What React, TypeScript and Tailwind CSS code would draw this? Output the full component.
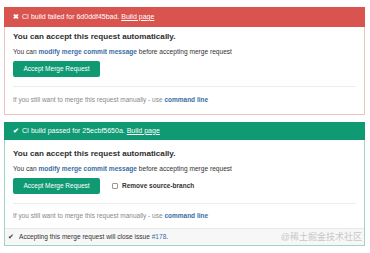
import React from "react";

const font = { fontFamily: '"Liberation Sans", Arial, "Noto Sans CJK SC", sans-serif' };

const Link: React.FC<{ children: React.ReactNode }> = ({ children }) => (
  <span className="font-bold text-[#3a6ea5]">{children}</span>
);

const AcceptBlock: React.FC<{ withCheckbox?: boolean }> = ({ withCheckbox }) => (
  <div className="px-[8px]">
    <div className="h-[20px] flex items-center text-[8.1px] font-bold text-[#2e2e2e] leading-none">
      You can accept this request automatically.
    </div>
    <div className="h-[10px] flex items-center text-[6.6px] text-[#333]">
      You can&nbsp;<Link>modify merge commit message</Link>&nbsp;before accepting merge request
    </div>
    <div className="mt-[4px] flex items-center gap-[12px]">
      <button className="w-[87px] h-[16px] rounded-[2px] bg-[#0f9a73] text-white text-[6.5px] flex items-center justify-center">
        Accept Merge Request
      </button>
      {withCheckbox && (
        <label className="flex items-center gap-[4px] text-[6.5px] font-bold text-[#333]">
          <span className="w-[6px] h-[6px] border border-[#999] rounded-[1px] bg-white" />
          Remove source-branch
        </label>
      )}
    </div>
    <div className="mt-[9px] border-t border-[#ececec]" />
    <div className={`${withCheckbox ? "h-[24px]" : "h-[26px]"} flex items-center text-[6.5px] text-[#888]`}>
      If you still want to merge this request manually - use&nbsp;<Link>command line</Link>
    </div>
  </div>
);

export default function App() {
  return (
    <div style={font} className="w-[370px] h-[253px] bg-white pl-[4px] pr-[5px] pt-[7px] relative">
      <div className="border border-[#ecc3c3] h-[108px]">
        <div className="h-[20px] -mt-px -mx-px bg-[#d9534f] text-white text-[7px] flex items-center pl-[9px]">
          <span className="font-bold mr-[3px]">✖</span>CI build failed for 6d0ddf45bad.&nbsp;
          <span className="underline">Build page</span>
        </div>
        <AcceptBlock />
      </div>

      <div className="mt-[7px] border border-[#9fd6c2] h-[124px] flex flex-col">
        <div className="h-[18px] -mt-px -mx-px bg-[#0f9a73] text-white text-[7px] flex items-center pl-[9px]">
          <span className="font-bold mr-[3px]">✔</span>CI build passed for 25ecbf5650a.&nbsp;
          <span className="underline">Build page</span>
        </div>
        <div className="mt-[4px]">
          <AcceptBlock withCheckbox />
        </div>
        <div className="mt-auto h-[17px] bg-[#f7f7f7] border-t border-[#e8e8e8] flex items-center pl-[3px] text-[6.6px] text-[#333]">
          <span className="mr-[5px]">✔</span>Accepting this merge request will close issue&nbsp;
          <span className="text-[#3a6ea5]">#178</span>.
        </div>
      </div>

      <div className="absolute right-[8px] top-[231px] text-[9px] text-[#c8c8c8]">@稀土掘金技术社区</div>
    </div>
  );
}
